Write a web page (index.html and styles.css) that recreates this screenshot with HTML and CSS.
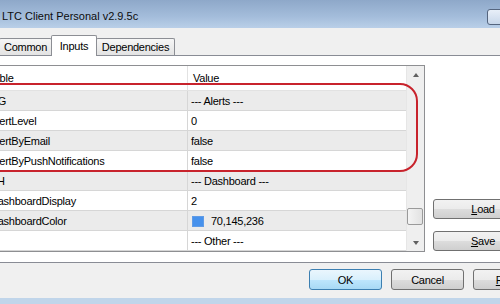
FILE: index.html
```html
<!DOCTYPE html>
<html lang="en">
<head>
    <meta charset="UTF-8">
    <meta name="viewport" content="width=device-width, initial-scale=1.0">
    <title>LTC Client Personal v2.9.5c</title>
    <link rel="stylesheet" href="styles.css">
</head>
<body>
    <div class="okno">
        <div class="titleBar">
            <span class="titleText">LTC Client Personal v2.9.5c</span>
            <span class="titleBtn"></span>
        </div>
        <div class="client">
            <div class="tabs">
                <div class="tab about">About</div>
                <div class="tab common">Common</div>
                <div class="tab inputsTab active">Inputs</div>
                <div class="tab deps">Dependencies</div>
            </div>
            <div class="panel">
                <div class="inputs">
                    <div class="list">
                        <div class="row head"><div class="name">Variable</div><div class="val">Value</div></div>
                        <div class="row grey"><div class="name">NG</div><div class="val">--- Alerts ---</div></div>
                        <div class="row"><div class="name">AlertLevel</div><div class="val">0</div></div>
                        <div class="row grey"><div class="name">AlertByEmail</div><div class="val">false</div></div>
                        <div class="row"><div class="name">AlertByPushNotifications</div><div class="val">false</div></div>
                        <div class="row grey"><div class="name">SH</div><div class="val">--- Dashboard ---</div></div>
                        <div class="row"><div class="name">DashboardDisplay</div><div class="val">2</div></div>
                        <div class="row grey"><div class="name">DashboardColor</div><div class="val"><span class="swatch" style="background: rgb(70,145,236);"></span>70,145,236</div></div>
                        <div class="row"><div class="name"></div><div class="val">--- Other ---</div></div>
                    </div>
                    <div class="scroll">
                        <div class="arrow"><span class="tri up"></span></div>
                        <div class="track"><div class="thumb"></div></div>
                        <div class="arrow"><span class="tri down"></span></div>
                    </div>
                    <div class="mark"></div>
                </div>
                <div class="sideButtons">
                    <button class="btn wide"><u>L</u>oad</button>
                    <button class="btn wide"><u>S</u>ave</button>
                </div>
            </div>
            <div class="footer">
                <button class="btn default">OK</button>
                <button class="btn">Cancel</button>
                <button class="btn"><u>R</u>eset</button>
            </div>
        </div>
        <div class="frameBottom"></div>
    </div>
</body>
</html>
```

FILE: styles.css
```css
body {
    margin: 0;
    padding: 0;
    overflow: hidden;
    background-color: #f0f0f0;
    font-family: "Liberation Sans", Arial, sans-serif;
    font-size: 11px;
    letter-spacing: -0.25px;
    color: #000;
}
.okno {
    width: 600px;
    margin-left: -40px;
}
.titleBar {
    height: 28px;
    display: flex;
    align-items: flex-start;
    background: linear-gradient(#8ea8c9, #a4bddb 60%, #b9cfe8);
}
.titleText {
    margin: 10px 0 0 42px;
    font-size: 11px;
    letter-spacing: 0;
    line-height: 13px;
    color: #0c0c0c;
}
.titleBtn {
    margin: 9px 43px 0 auto;
    width: 30px;
    height: 16px;
    box-sizing: border-box;
    border: 1px solid #55657e;
    border-radius: 3px;
    background: linear-gradient(#e8eff8, #c8d7ea);
}
.client {
    background-color: #f0f0f0;
    padding: 7px 0 0 2px;
}
.tabs {
    display: flex;
    align-items: flex-end;
    height: 20px;
}
.tab {
    box-sizing: border-box;
    height: 17px;
    padding-top: 1px;
    line-height: 15px;
    text-align: center;
    border: 1px solid #8c8e94;
    border-bottom: none;
    border-radius: 2px 2px 0 0;
    background: linear-gradient(#f6f6f6, #e3e3e3);
    margin-right: -1px;
}
.tab.about { width: 38px; }
.tab.common { width: 53px; }
.tab.inputsTab { width: 46px; }
.tab.deps { width: 79px; }
.tab.active {
    position: relative;
    z-index: 1;
    height: 21px;
    margin-bottom: -1px;
    padding-top: 2px;
    line-height: 16px;
    background: #fff;
}
.panel {
    display: flex;
    align-items: stretch;
    background: #fff;
    border: 1px solid #898c95;
    padding: 9px 0 10px 3px;
}
.inputs {
    position: relative;
    display: flex;
    width: 459px;
    box-sizing: border-box;
    border: 1px solid #8e8f92;
}
.list {
    width: 439px;
}
.row {
    display: flex;
    height: 20px;
    box-sizing: border-box;
    border-bottom: 1px solid #d6d6d6;
    background: #fff;
}
.row.grey {
    background: #ebebeb;
}
.row .name {
    width: 221px;
    box-sizing: border-box;
    border-right: 1px solid #d6d6d6;
    padding: 1px 0 0 23px;
    line-height: 18px;
    white-space: nowrap;
    overflow: hidden;
}
.row .val {
    flex: 1;
    padding: 1px 0 0 3px;
    line-height: 18px;
    display: flex;
    align-items: center;
    white-space: nowrap;
}
.row.head {
    height: 25px;
    border-bottom-color: #e2e2e2;
}
.row.head .name {
    padding: 0 0 0 9px;
    line-height: 24px;
    border-right-color: #e2e2e2;
}
.row.head .val {
    padding: 0 0 0 5px;
    line-height: 24px;
}
.swatch {
    width: 12px;
    height: 11px;
    margin: 1px 7px 0 1px;
    box-sizing: border-box;
    border: 1px solid #5f9be6;
}
.scroll {
    width: 18px;
    display: flex;
    flex-direction: column;
    background: #efefef;
    border-left: 1px solid #e6e6e6;
    box-sizing: border-box;
}
.arrow {
    height: 17px;
    display: flex;
    align-items: center;
    justify-content: center;
}
.tri {
    width: 0;
    height: 0;
    border-left: 3.5px solid transparent;
    border-right: 3.5px solid transparent;
}
.tri.up { border-bottom: 4px solid #606060; }
.tri.down { border-top: 4px solid #606060; }
.track {
    flex: 1;
}
.thumb {
    margin: 125px 1px 0 0;
    height: 17px;
    box-sizing: border-box;
    border: 1px solid #9a9a9a;
    border-radius: 2px;
    background: linear-gradient(90deg, #f4f4f4, #e2e2e2);
}
.mark {
    position: absolute;
    left: -21px;
    top: 17px;
    width: 472px;
    height: 89px;
    box-sizing: border-box;
    border: 2px solid #c8232c;
    border-radius: 18px;
}
.sideButtons {
    display: flex;
    flex-direction: column;
    justify-content: flex-end;
    gap: 12px;
    margin-left: 8px;
    padding-bottom: 1px;
}
.btn {
    font-family: "Liberation Sans", Arial, sans-serif;
    font-size: 11px;
    letter-spacing: -0.25px;
    color: #000;
    width: 73px;
    height: 21px;
    padding: 0;
    border: 1px solid #707070;
    border-radius: 3px;
    background: linear-gradient(#f2f2f2, #ebebeb 50%, #dddddd 51%, #cfcfcf);
}
.btn.wide {
    width: 100px;
    height: 20px;
}
.btn.default {
    border-color: #3c7fb1;
    background: linear-gradient(#eaf6fd, #d9f0fc 50%, #bee6fd 51%, #a7d9f5);
}
.footer {
    display: flex;
    justify-content: flex-end;
    gap: 9px;
    height: 35px;
    box-sizing: border-box;
    padding: 6px 14px 0 0;
}
.frameBottom {
    height: 12px;
    background: #c0d5ea;
}
```
